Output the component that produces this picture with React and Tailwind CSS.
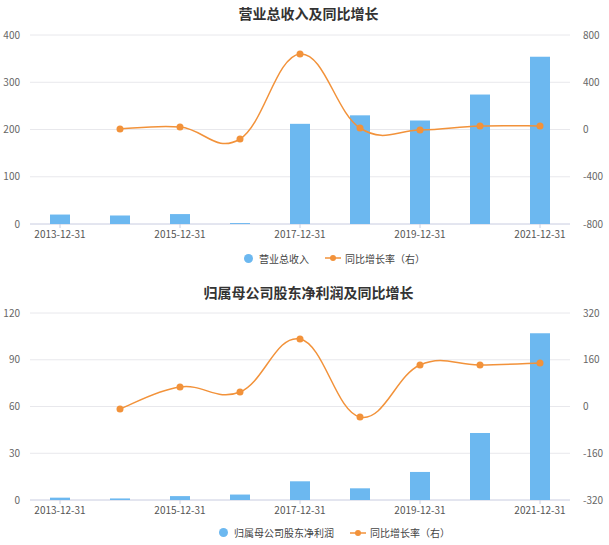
import React from 'react';

const font = { fontFamily: '"Noto Sans CJK SC", "Noto Sans", sans-serif' };

function smooth(pts) {
  let d = `M${pts[0][0]},${pts[0][1]}`;
  for (let i = 0; i < pts.length - 1; i++) {
    const p0 = pts[i - 1] || pts[i], p1 = pts[i], p2 = pts[i + 1], p3 = pts[i + 2] || p2;
    const t = 0.2;
    const c1 = [p1[0] + (p2[0] - p0[0]) * t, p1[1] + (p2[1] - p0[1]) * t];
    const c2 = [p2[0] - (p3[0] - p1[0]) * t, p2[1] - (p3[1] - p1[1]) * t];
    d += ` C${c1[0]},${c1[1]} ${c2[0]},${c2[1]} ${p2[0]},${p2[1]}`;
  }
  return d;
}

// top, bottom in svg coords; bars: values scaled by max; line: y px
function Chart({ h, top, bottom, leftTicks, rightTicks, max, bars, line }) {
  const scale = (v) => bottom - (v / max) * (bottom - top);
  const pts = line.map((y, i) => [120 + 60 * i, y]);
  const xl = ['2013-12-31', '2015-12-31', '2017-12-31', '2019-12-31', '2021-12-31'];
  return (
    <svg width="609" height={h} className="block" style={font}>
      {leftTicks.map((t, i) => {
        const y = top + ((bottom - top) * i) / (leftTicks.length - 1);
        return (
          <g key={i}>
            <line x1="30" x2="570" y1={y} y2={y} stroke={i === leftTicks.length - 1 ? '#c8cce0' : '#e8e8ec'} />
            <text x="20" y={y + 3.5} fontSize="10" fill="#666" textAnchor="end">{t}</text>
            <text x="583" y={y + 3.5} fontSize="10" fill="#666">{rightTicks[i]}</text>
          </g>
        );
      })}
      {bars.map((v, i) => (
        <rect key={i} x={50 + 60 * i} y={scale(v)} width="20" height={bottom - scale(v)} fill="#6cb8f0" />
      ))}
      {xl.map((t, i) => (
        <g key={t}>
          <line x1={60 + 120 * i} x2={60 + 120 * i} y1={bottom} y2={bottom + 4} stroke="#c8cce0" />
          <text x={60 + 120 * i} y={bottom + 14} fontSize="10" fill="#555" textAnchor="middle">{t}</text>
        </g>
      ))}
      <path d={smooth(pts)} fill="none" stroke="#f2923a" strokeWidth="1.5" />
      {pts.map((p, i) => (
        <circle key={i} cx={p[0]} cy={p[1]} r="3.5" fill="#f2923a" />
      ))}
    </svg>
  );
}

function Legend({ barLabel }) {
  return (
    <div className="flex items-center justify-center gap-4 text-[10px] text-[#444]" style={font}>
      <div className="flex items-center gap-1.5">
        <span className="w-[9px] h-[9px] rounded-full bg-[#6cb8f0]" />
        <span>{barLabel}</span>
      </div>
      <div className="flex items-center gap-1">
        <svg width="16" height="8"><line x1="0" x2="16" y1="4" y2="4" stroke="#f2923a" strokeWidth="1.5" /><circle cx="8" cy="4" r="3" fill="#f2923a" /></svg>
        <span>同比增长率（右）</span>
      </div>
    </div>
  );
}

export default function App() {
  return (
    <div className="w-[609px] h-[545px] bg-white overflow-hidden" style={font}>
      <div className="h-[26px] flex items-center justify-center text-[14px] font-bold text-[#333] pl-[8px]">营业总收入及同比增长</div>
      <Chart
        h={220}
        top={9}
        bottom={198}
        leftTicks={['400', '300', '200', '100', '0']}
        rightTicks={['800', '400', '0', '-400', '-800']}
        max={400}
        bars={[20, 18, 21, 2, 212, 230, 219, 274, 354]}
        line={[103, 101, 113, 28, 102, 104, 100, 100]}
      />
      <div className="h-[24px] flex items-center justify-center pl-[60px]"><Legend barLabel="营业总收入" /></div>
      <div className="h-[35px] pt-[10px] flex items-center justify-center text-[14px] font-bold text-[#333] pl-[8px]">归属母公司股东净利润及同比增长</div>
      <Chart
        h={215}
        top={8}
        bottom={195}
        leftTicks={['120', '90', '60', '30', '0']}
        rightTicks={['320', '160', '0', '-160', '-320']}
        max={120}
        bars={[1.5, 1, 2.5, 3.5, 12, 7.5, 18, 43, 107]}
        line={[104, 82, 87, 34, 112, 60, 60, 58]}
      />
      <div className="h-[25px] flex items-center justify-center pl-[60px]"><Legend barLabel="归属母公司股东净利润" /></div>
    </div>
  );
}
